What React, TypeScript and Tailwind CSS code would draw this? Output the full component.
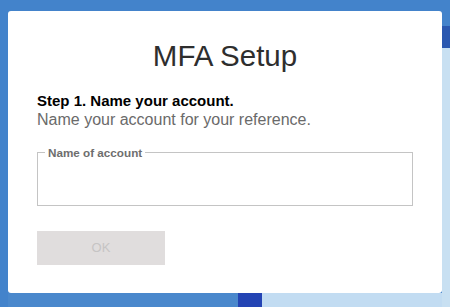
import React from "react";

export default function App() {
  return (
    <div className="flex w-[450px] h-[307px] overflow-hidden bg-[#4383cb]" style={{ fontFamily: '"Liberation Sans", Arial, sans-serif' }}>
      <div className="flex flex-col w-[442px] pt-[11px] pl-[8px]">
        <div className="w-[434px] h-[282px] bg-white rounded-[3px] pl-[29px] pr-[29px] pt-[29px] flex flex-col">
          <h1 className="text-[29.5px] leading-[32px] text-[#2e2e2e] text-center">MFA Setup</h1>
          <div className="mt-[20px] text-[15px] leading-[18px] font-bold text-black">Step 1. Name your account.</div>
          <div className="text-[16px] leading-[19px] text-[#6a6a6a]">Name your account for your reference.</div>
          <fieldset className="mt-[17px] w-[376px] h-[60px] border border-[#c4c4c4] px-[7px]">
            <legend className="px-[3px] text-[11.7px] leading-[13px] font-bold text-[#6e6e6e]">Name of account</legend>
          </fieldset>
          <button className="mt-[25px] w-[128px] h-[34px] bg-[#e0dddd] text-[13px] text-[#c6c4c4]">OK</button>
        </div>
        <div className="flex h-[14px] mt-auto">
          <div className="w-[230px] bg-[#4a88cc]" />
          <div className="w-[24px] bg-[#2444b4]" />
          <div className="flex-1 bg-[#c2dcf2]" />
        </div>
      </div>
      <div className="flex flex-col w-[8px]">
        <div className="h-[26px] bg-[#4383cb]" />
        <div className="h-[22px] bg-[#2a58b0]" />
        <div className="flex-1 bg-[#c8e0f2]" />
      </div>
    </div>
  );
}
